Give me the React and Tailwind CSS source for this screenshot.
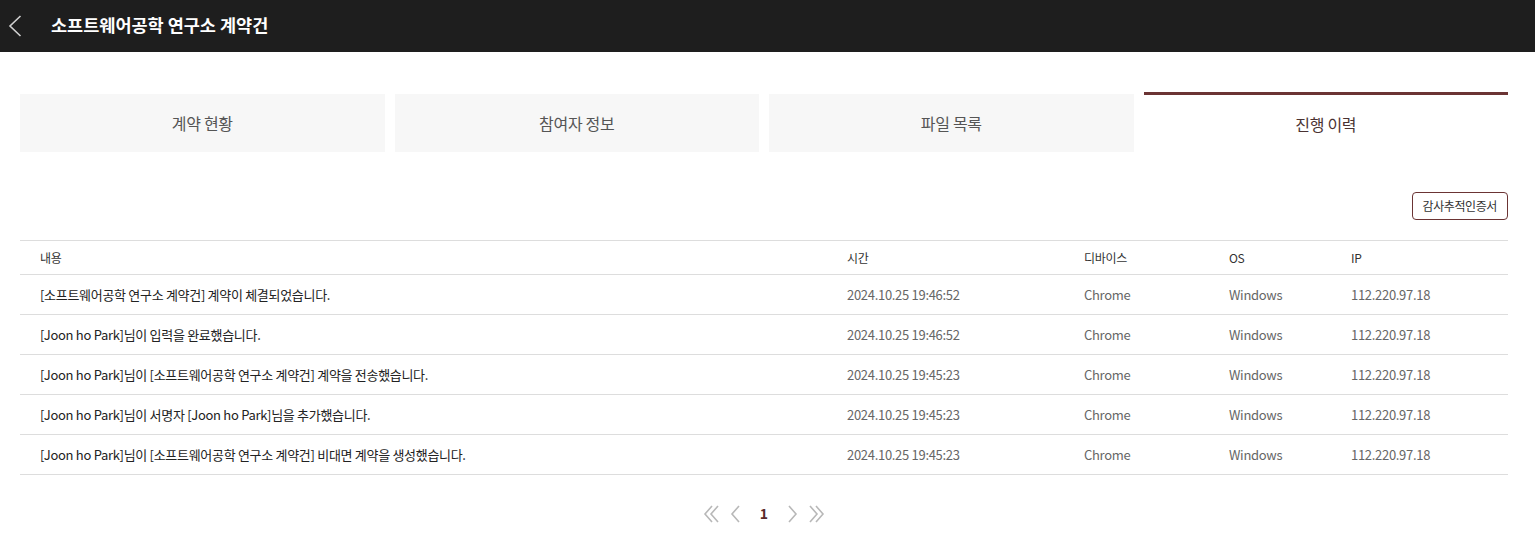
import React from "react";

const tabs = ["계약 현황", "참여자 정보", "파일 목록", "진행 이력"];

const rows = [
  { text: "[소프트웨어공학 연구소 계약건] 계약이 체결되었습니다.", time: "2024.10.25 19:46:52" },
  { text: "[Joon ho Park]님이 입력을 완료했습니다.", time: "2024.10.25 19:46:52" },
  { text: "[Joon ho Park]님이 [소프트웨어공학 연구소 계약건] 계약을 전송했습니다.", time: "2024.10.25 19:45:23" },
  { text: "[Joon ho Park]님이 서명자 [Joon ho Park]님을 추가했습니다.", time: "2024.10.25 19:45:23" },
  { text: "[Joon ho Park]님이 [소프트웨어공학 연구소 계약건] 비대면 계약을 생성했습니다.", time: "2024.10.25 19:45:23" },
];

function Chevron({ dir = "left", double = false }) {
  const left = dir === "left";
  return (
    <svg width={double ? 17 : 11} height="18" viewBox={double ? "0 0 17 18" : "0 0 11 18"} fill="none" stroke="#b8b8b8" strokeWidth="1.6">
      {double ? (
        <>
          <path d={left ? "M9 1 L2 9 L9 17" : "M2 1 L9 9 L2 17"} />
          <path d={left ? "M15 1 L8 9 L15 17" : "M8 1 L15 9 L8 17"} />
        </>
      ) : (
        <path d={left ? "M9 1 L2 9 L9 17" : "M2 1 L9 9 L2 17"} />
      )}
    </svg>
  );
}

export default function App() {
  return (
    <div className="min-h-screen bg-white" style={{ fontFamily: '"Noto Sans CJK KR", "Noto Sans", sans-serif' }}>
      <header className="h-[52px] bg-[#1e1e1e] flex items-center">
        <button className="w-[30px] h-[52px] flex items-center justify-center">
          <svg width="14" height="22" viewBox="0 0 14 22" fill="none" stroke="#d0d0d0" strokeWidth="1.6">
            <path d="M12.5 1 L2 11 L12.5 21" />
          </svg>
        </button>
        <h1 className="ml-[21px] text-white text-[17.5px] font-bold mb-[2px]">소프트웨어공학 연구소 계약건</h1>
      </header>

      <main className="pl-5 pr-[27px] pt-[40px]">
        <div className="grid grid-cols-4 gap-[10px]">
          {tabs.map((t, i) =>
            i === 3 ? (
              <div key={t} className="h-[60px] border-t-[3px] border-[#6b3434] bg-white flex items-center justify-center text-[16px] text-[#4a3232] tracking-[-0.3px]">
                {t}
              </div>
            ) : (
              <div key={t} className="h-[58px] mt-[2px] bg-[#f7f7f7] flex items-center justify-center text-[16px] text-[#555] tracking-[-0.3px]">
                {t}
              </div>
            )
          )}
        </div>

        <div className="flex justify-end mt-[40px]">
          <button className="h-[28px] px-[10px] border border-[#6b3434] rounded-[4px] text-[12px] text-[#333] tracking-[-0.4px]">
            감사추적인증서
          </button>
        </div>

        <table className="w-full mt-[20px] border-t border-[#ddd] text-left tracking-[-0.3px]">
          <colgroup>
            <col className="w-[807px]" />
            <col className="w-[237px]" />
            <col className="w-[145px]" />
            <col className="w-[122px]" />
            <col />
          </colgroup>
          <thead>
            <tr className="h-[34px] border-b border-[#ddd] text-[12px] text-[#333]">
              <th className="font-normal pl-5">내용</th>
              <th className="font-normal pl-5">시간</th>
              <th className="font-normal pl-5">디바이스</th>
              <th className="font-normal pl-5">OS</th>
              <th className="font-normal pl-5">IP</th>
            </tr>
          </thead>
          <tbody>
            {rows.map((r, i) => (
              <tr key={i} className="h-[40px] border-b border-[#ddd] text-[13px]">
                <td className="pl-5 text-[#222]">{r.text}</td>
                <td className="pl-5 text-[#666]">{r.time}</td>
                <td className="pl-5 text-[#666]">Chrome</td>
                <td className="pl-5 text-[#666]">Windows</td>
                <td className="pl-5 text-[#666]">112.220.97.18</td>
              </tr>
            ))}
          </tbody>
        </table>

        <div className="flex items-center justify-center mt-[28px]">
          <Chevron dir="left" double />
          <span className="w-[10px]" />
          <Chevron dir="left" />
          <span className="w-[46px] text-center text-[14px] font-bold text-[#5a2a2a]">1</span>
          <Chevron dir="right" />
          <span className="w-[10px]" />
          <Chevron dir="right" double />
        </div>
      </main>
    </div>
  );
}
